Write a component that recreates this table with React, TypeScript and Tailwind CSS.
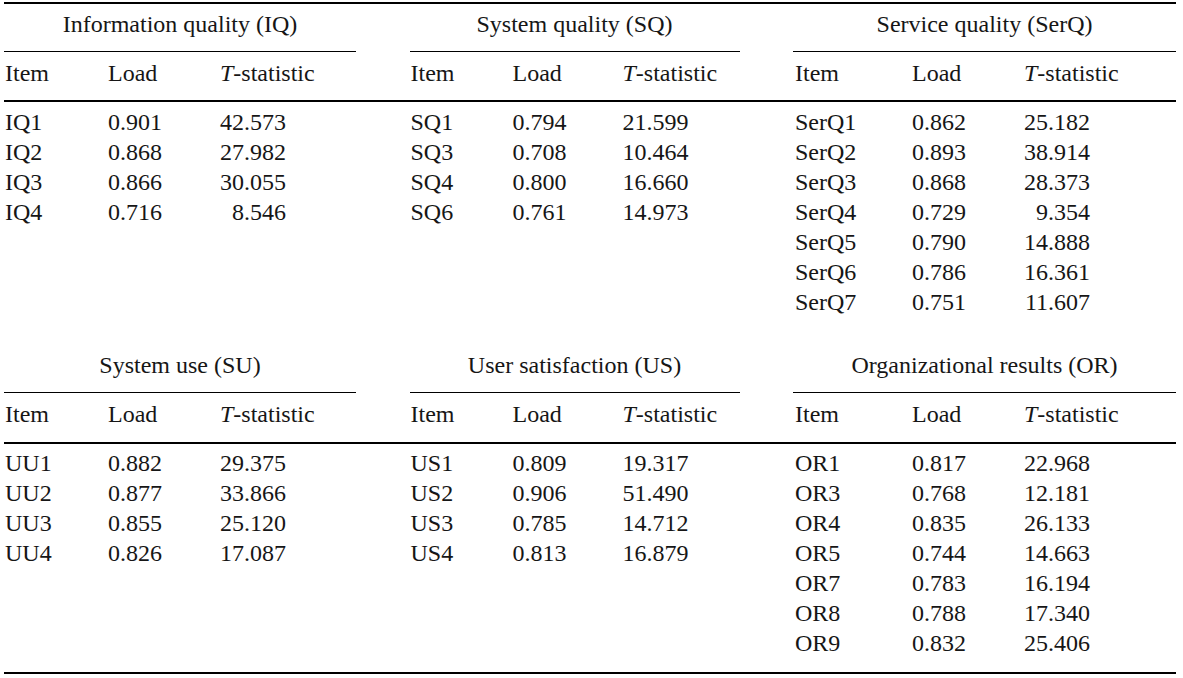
type Row = [string, string, string];

type Panel = {
  title: string;
  rows: Row[];
};

const top: Panel[] = [
  {
    title: "Information quality (IQ)",
    rows: [
      ["IQ1", "0.901", "42.573"],
      ["IQ2", "0.868", "27.982"],
      ["IQ3", "0.866", "30.055"],
      ["IQ4", "0.716", "8.546"],
    ],
  },
  {
    title: "System quality (SQ)",
    rows: [
      ["SQ1", "0.794", "21.599"],
      ["SQ3", "0.708", "10.464"],
      ["SQ4", "0.800", "16.660"],
      ["SQ6", "0.761", "14.973"],
    ],
  },
  {
    title: "Service quality (SerQ)",
    rows: [
      ["SerQ1", "0.862", "25.182"],
      ["SerQ2", "0.893", "38.914"],
      ["SerQ3", "0.868", "28.373"],
      ["SerQ4", "0.729", "9.354"],
      ["SerQ5", "0.790", "14.888"],
      ["SerQ6", "0.786", "16.361"],
      ["SerQ7", "0.751", "11.607"],
    ],
  },
];

const bottom: Panel[] = [
  {
    title: "System use (SU)",
    rows: [
      ["UU1", "0.882", "29.375"],
      ["UU2", "0.877", "33.866"],
      ["UU3", "0.855", "25.120"],
      ["UU4", "0.826", "17.087"],
    ],
  },
  {
    title: "User satisfaction (US)",
    rows: [
      ["US1", "0.809", "19.317"],
      ["US2", "0.906", "51.490"],
      ["US3", "0.785", "14.712"],
      ["US4", "0.813", "16.879"],
    ],
  },
  {
    title: "Organizational results (OR)",
    rows: [
      ["OR1", "0.817", "22.968"],
      ["OR3", "0.768", "12.181"],
      ["OR4", "0.835", "26.133"],
      ["OR5", "0.744", "14.663"],
      ["OR7", "0.783", "16.194"],
      ["OR8", "0.788", "17.340"],
      ["OR9", "0.832", "25.406"],
    ],
  },
];

// column offsets per panel position (Item / Load / T-statistic)
const cols = [
  "pl-[1px] grid-cols-[103px_112px_1fr]",
  "pl-[1px] grid-cols-[102px_110px_1fr]",
  "pl-[2px] grid-cols-[117px_112px_1fr]",
];

const panelGrid = "grid grid-cols-[352px_330px_383px] justify-between";

function Section({
  panels,
  titleCls,
  headCls,
  bodyCls,
}: {
  panels: Panel[];
  titleCls: string;
  headCls: string;
  bodyCls: string;
}) {
  return (
    <div>
      {/* Titles */}
      <div className={panelGrid}>
        {panels.map((p) => (
          <div key={p.title} className={`border-b border-black text-center ${titleCls}`}>
            {p.title}
          </div>
        ))}
      </div>
      {/* Column headers */}
      <div className={`${panelGrid} border-b-2 border-black ${headCls}`}>
        {panels.map((p, i) => (
          <div key={p.title} className={`grid ${cols[i]}`}>
            <span>Item</span>
            <span>Load</span>
            <span>
              <i>T</i>-statistic
            </span>
          </div>
        ))}
      </div>
      {/* Rows */}
      <div className={`${panelGrid} ${bodyCls}`}>
        {panels.map((p, i) => (
          <div key={p.title}>
            {p.rows.map(([item, load, t]) => (
              <div key={item} className={`grid ${cols[i]}`}>
                <span>{item}</span>
                <span>{load}</span>
                <span>
                  <span className="inline-block w-[66px] text-right">{t}</span>
                </span>
              </div>
            ))}
          </div>
        ))}
      </div>
    </div>
  );
}

export default function App() {
  return (
    <div className="h-[678px] w-[1183px] bg-white pt-[2px] pl-[4px]">
      <div
        className="w-[1172px] border-t-2 border-b-2 border-black text-[24px] leading-[30px] text-[#161616]"
        style={{ fontFamily: '"Liberation Serif", "Times New Roman", serif' }}
      >
        <Section
          panels={top}
          titleCls="pt-[5px] pb-[12px]"
          headCls="pt-[6px] pb-[12px]"
          bodyCls="pt-[5px]"
        />
        <div className="h-[33px]" />
        <Section
          panels={bottom}
          titleCls="pb-[12px]"
          headCls="pt-[6px] pb-[13px]"
          bodyCls="pt-[4px] pb-[14px]"
        />
      </div>
    </div>
  );
}
